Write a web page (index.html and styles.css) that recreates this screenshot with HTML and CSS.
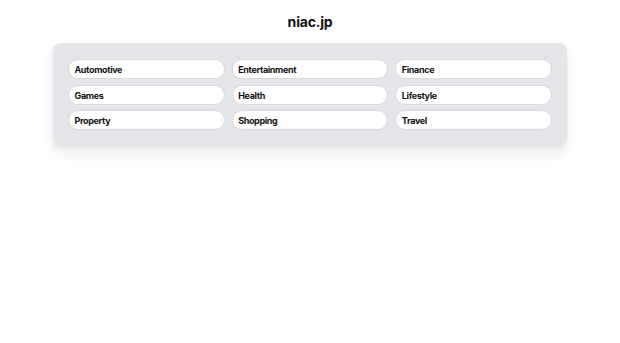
FILE: index.html
```html
<!DOCTYPE html>
<html lang="en">
<head>
    <meta charset="UTF-8">
    <meta name="viewport" content="width=device-width, initial-scale=1.0">
    <title>niac.jp</title>
    <link rel="stylesheet" href="styles.css">
</head>
<body>
    <div class="page">
        <h1 class="title">niac.jp</h1>

        <!-- カテゴリ一覧 -->
        <div class="panel">
            <a class="pill" href="#">Automotive</a>
            <a class="pill" href="#">Entertainment</a>
            <a class="pill" href="#">Finance</a>
            <a class="pill" href="#">Games</a>
            <a class="pill" href="#">Health</a>
            <a class="pill" href="#">Lifestyle</a>
            <a class="pill" href="#">Property</a>
            <a class="pill" href="#">Shopping</a>
            <a class="pill" href="#">Travel</a>
        </div>
    </div>
</body>
</html>
```

FILE: styles.css
```css
* {
    margin: 0;
    padding: 0;
    box-sizing: border-box;
}

body, html {
    height: 100%;
    background: #fff;
    font-family: Inter, "Noto Sans", sans-serif;
    color: #111;
}

.page {
    width: 514px;
    margin: 0 auto;
    padding-top: 13px;
}

.title {
    font-size: 14px;
    font-weight: 700;
    text-align: center;
    line-height: 18px;
    letter-spacing: -0.2px;
    margin-bottom: 12px;
}

.panel {
    background: #e5e6ea;
    border-radius: 8px;
    padding: 16px 15px 16px;
    display: grid;
    grid-template-columns: repeat(3, 1fr);
    column-gap: 7px;
    row-gap: 5.5px;
    box-shadow: 0 8px 14px rgba(0, 0, 0, 0.07), 0 2px 4px rgba(0, 0, 0, 0.05);
}

.pill {
    display: block;
    height: 20px;
    line-height: 17px;
    padding: 1px 5.5px 0;
    background: #fff;
    border: 1px solid #d8dade;
    border-radius: 10px;
    font-size: 9px;
    font-weight: 700;
    letter-spacing: -0.35px;
    color: #111;
    text-decoration: none;
}
```
